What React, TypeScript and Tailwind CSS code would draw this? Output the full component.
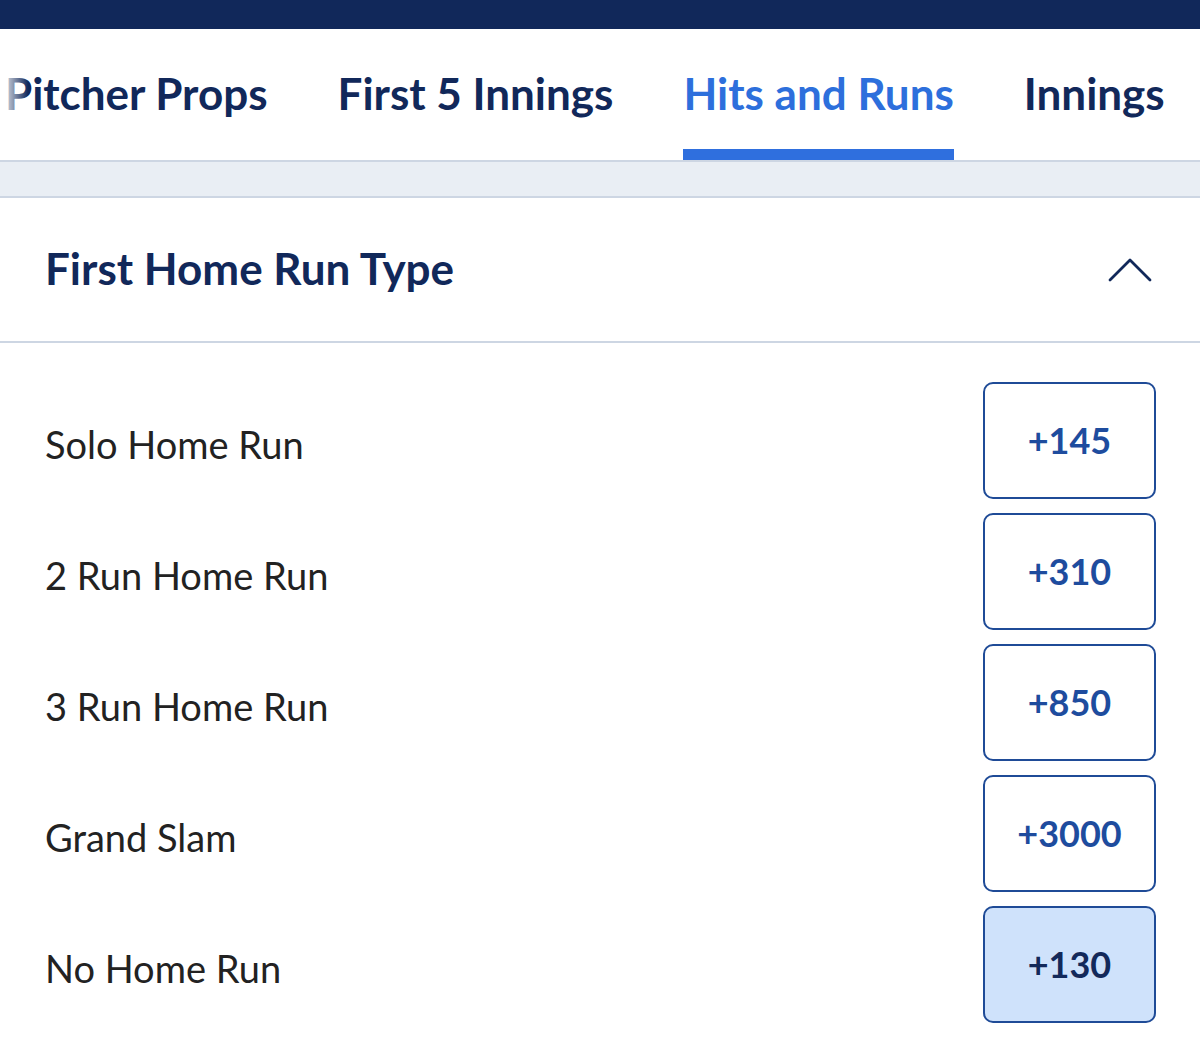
import React from 'react';

const tabs = ["Pitcher Props", "First 5 Innings", "Hits and Runs", "Innings"];

const outcomes = [
  { label: "Solo Home Run", odds: "+145" },
  { label: "2 Run Home Run", odds: "+310" },
  { label: "3 Run Home Run", odds: "+850" },
  { label: "Grand Slam", odds: "+3000" },
  { label: "No Home Run", odds: "+130", selected: true },
];

const App = () => {
  return (
    <div className="w-[1200px] h-[1045px] overflow-hidden bg-white font-['Lato',sans-serif]">
      {/* Top bar */}
      <div className="h-[29px] bg-[#11285a]" />

      {/* Tabs */}
      <div className="relative h-[133px] overflow-hidden border-b-2 border-[#cdd6e3]">
        <div className="flex gap-[70px] pl-[5px] whitespace-nowrap">
          {tabs.map((tab) => {
            const active = tab === "Hits and Runs";
            return (
              <div key={tab} className="flex flex-col">
                <span
                  className={`h-[120px] pt-[38px] text-[44px] font-bold leading-[52px] ${
                    active ? "text-[#2d6fdc]" : "text-[#11285a]"
                  }`}
                >
                  {tab}
                </span>
                <div className={`h-[11px] ${active ? "bg-[#2f6fde]" : ""}`} />
              </div>
            );
          })}
        </div>
        <div className="absolute left-0 top-0 h-full w-[28px] bg-gradient-to-r from-white to-transparent" />
      </div>

      {/* Gray band */}
      <div className="h-[36px] bg-[#e9eef4] border-b-2 border-[#cdd6e3]" />

      {/* Market header */}
      <div className="flex items-center justify-between h-[145px] pl-[45px] pr-[48px] border-b-2 border-[#cdd6e3]">
        <h2 className="pb-[4px] text-[44px] font-bold text-[#11285a]">First Home Run Type</h2>
        <svg width="44" height="26" viewBox="0 0 44 26" fill="none">
          <path d="M2 23L22 3L42 23" stroke="#11285a" strokeWidth="2.8" strokeLinecap="round" strokeLinejoin="round" />
        </svg>
      </div>

      {/* Outcomes */}
      <div className="flex flex-col gap-[14px] pt-[39px] pl-[45px] pr-[44px]">
        {outcomes.map((o) => (
          <div key={o.label} className="flex items-center justify-between h-[117px]">
            <span className="pt-[8px] text-[38px] text-[#222222]">{o.label}</span>
            <div
              className={`flex items-center justify-center w-[173px] h-[117px] rounded-[10px] border-2 border-[#1f4b97] ${
                o.selected ? "bg-[#cfe2fb]" : "bg-white"
              }`}
            >
              <span
                className={`pb-[2px] text-[36px] font-bold ${o.selected ? "text-[#13295a]" : "text-[#1e4c9e]"}`}
              >
                {o.odds}
              </span>
            </div>
          </div>
        ))}
      </div>
    </div>
  );
};

export default App;
